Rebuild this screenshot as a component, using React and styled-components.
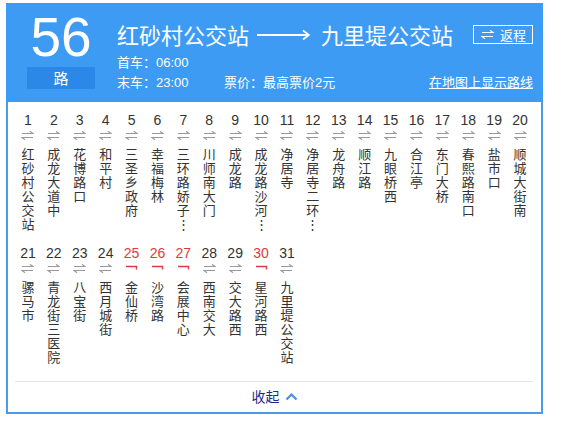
import styled, { createGlobalStyle } from "styled-components";

const GlobalStyle = createGlobalStyle`
html, body {
  margin: 0;
  padding: 0;
  background: #ffffff;
}
body {
  font-family: "Liberation Sans", "Noto Sans CJK SC", sans-serif;
}
`;

const Page = styled.div`
padding: 3px 0 0 6px;
`;

const Panel = styled.div`
width: 537px;
display: flex;
flex-direction: column;
`;

const Header = styled.div`
display: flex;
flex-direction: row;
background: #3e9bf4;
height: 99px;
box-sizing: border-box;
padding: 7px 10px 0 21px;
color: #ffffff;
`;

const LineBadge = styled.div`
width: 68px;
display: flex;
flex-direction: column;
align-items: center;
`;

const LineNumber = styled.div`
font-family: "Liberation Sans", sans-serif;
font-size: 55px;
line-height: 55px;
height: 55px;
`;

const LineUnit = styled.div`
margin-top: 2px;
width: 68px;
height: 22px;
background: #2b88e6;
font-family: "Noto Sans CJK SC", sans-serif;
font-size: 15px;
line-height: 22px;
text-align: center;
`;

const Info = styled.div`
flex: 1;
margin-left: 22px;
padding-top: 10px;
display: flex;
flex-direction: column;
`;

const TitleRow = styled.div`
display: flex;
align-items: center;
height: 28px;
font-family: "Noto Sans CJK SC", sans-serif;
font-size: 22px;
`;

const Station = styled.span`
line-height: 28px;
`;

const LongArrow = styled.svg`
margin: 2px 10px 0 8px;
`;

const BackButton = styled.div`
margin-left: auto;
display: flex;
align-items: center;
gap: 6px;
height: 17px;
padding: 0 6px 0 7px;
border: 1px solid #ffffff;
font-size: 13px;
line-height: 17px;
`;

const MetaRow = styled.div`
display: flex;
align-items: center;
height: 18px;
margin-top: ${p => p.$top}px;
font-size: 13px;
line-height: 18px;
`;

const MetaLabel = styled.span`
width: ${p => p.$width ? p.$width + "px" : "auto"};
`;

const MapLink = styled.a`
margin-left: auto;
color: #ffffff;
text-decoration: underline;
cursor: pointer;
`;

const Body = styled.div`
border: 2px solid #4a9be9;
border-top: none;
background: #ffffff;
display: flex;
flex-direction: column;
`;

const StopGrid = styled.div`
display: grid;
grid-template-columns: repeat(20, 1fr);
row-gap: 14px;
padding: 10px 8px 0 7px;
`;

const Stop = styled.div`
display: flex;
flex-direction: column;
align-items: center;
color: ${p => p.$oneway ? "#df3a3f" : "#333333"};
`;

const StopIndex = styled.div`
font-family: "Liberation Sans", sans-serif;
font-size: 14px;
line-height: 16px;
height: 16px;
`;

const Direction = styled.svg`
margin-top: 3px;
display: block;
`;

const StopName = styled.div`
margin-top: 7px;
width: 14px;
height: 84px;
font-family: "Noto Sans CJK SC", sans-serif;
font-size: 13px;
line-height: 14px;
color: #333333;
text-align: center;
word-break: break-all;
`;

const Divider = styled.div`
margin: 17px 8px 0 7px;
height: 1px;
background: #e6e6e6;
`;

const Footer = styled.div`
display: flex;
justify-content: center;
align-items: center;
gap: 5px;
height: 20px;
margin: 4px 0 6px;
font-family: "Noto Sans CJK SC", sans-serif;
font-size: 14px;
color: #1c2a92;
cursor: pointer;
`;

const stops = [
  "红砂村公交站", "成龙大道中", "花博路口", "和平村", "三圣乡政府",
  "幸福梅林", "三环路娇子立交", "川师南大门", "成龙路", "成龙路沙河堡站",
  "净居寺", "净居寺二环路口", "龙舟路", "顺江路", "九眼桥西",
  "合江亭", "东门大桥", "春熙路南口", "盐市口", "顺城大街南",
  "骡马市", "青龙街三医院", "八宝街", "西月城街", "金仙桥",
  "沙湾路", "会展中心", "西南交大", "交大路西", "星河路西",
  "九里堤公交站",
];

const oneWay = [25, 26, 27, 30];

const shortName = name => name.length > 6 ? name.slice(0, 5) + "⋮" : name;

const TwoWay = ({ color }) => (
  <Direction width="13" height="9" viewBox="0 0 13 9" fill="none" stroke={color} strokeWidth="1.2">
    <path d="M1 2.5H12L9 0.3" />
    <path d="M12 6.5H1L4 8.7" />
  </Direction>
);

const OneWay = () => (
  <Direction width="13" height="9" viewBox="0 0 13 9" fill="none" stroke="#df3a3f" strokeWidth="1.4">
    <path d="M1 2.5H11.5V5.5" />
  </Direction>
);

const App = () => {
  return <Page>
    <GlobalStyle />
    <Panel>
      <Header>
        <LineBadge>
          <LineNumber>56</LineNumber>
          <LineUnit>路</LineUnit>
        </LineBadge>
        <Info>
          <TitleRow>
            <Station>红砂村公交站</Station>
            <LongArrow width="54" height="12" viewBox="0 0 54 12" fill="none" stroke="#ffffff" strokeWidth="2">
              <path d="M0 6H52" />
              <path d="M46 1.5L52 6L46 10.5" strokeWidth="1.6" />
            </LongArrow>
            <Station>九里堤公交站</Station>
            <BackButton>
              <svg width="13" height="9" viewBox="0 0 13 9" fill="none" stroke="#ffffff" strokeWidth="1.2">
                <path d="M1 2.5H12L9 0.3" />
                <path d="M12 6.5H1L4 8.7" />
              </svg>
              返程
            </BackButton>
          </TitleRow>
          <MetaRow $top={6}>
            <MetaLabel>首车：06:00</MetaLabel>
          </MetaRow>
          <MetaRow $top={2}>
            <MetaLabel $width={107}>末车：23:00</MetaLabel>
            <MetaLabel>票价：最高票价2元</MetaLabel>
            <MapLink>在地图上显示路线</MapLink>
          </MetaRow>
        </Info>
      </Header>
      <Body>
        <StopGrid>
          {stops.map((name, i) => {
            const n = i + 1;
            const single = oneWay.includes(n);
            return <Stop key={n} $oneway={single}>
              <StopIndex>{n}</StopIndex>
              {single ? <OneWay /> : <TwoWay color="#9a9a9a" />}
              <StopName>{shortName(name)}</StopName>
            </Stop>;
          })}
        </StopGrid>
        <Divider />
        <Footer>
          收起
          <svg width="13" height="9" viewBox="0 0 13 9" fill="none" stroke="#4a8fe0" strokeWidth="2.2">
            <path d="M1.5 7.5L6.5 2.5L11.5 7.5" />
          </svg>
        </Footer>
      </Body>
    </Panel>
  </Page>;
};

export default App;
